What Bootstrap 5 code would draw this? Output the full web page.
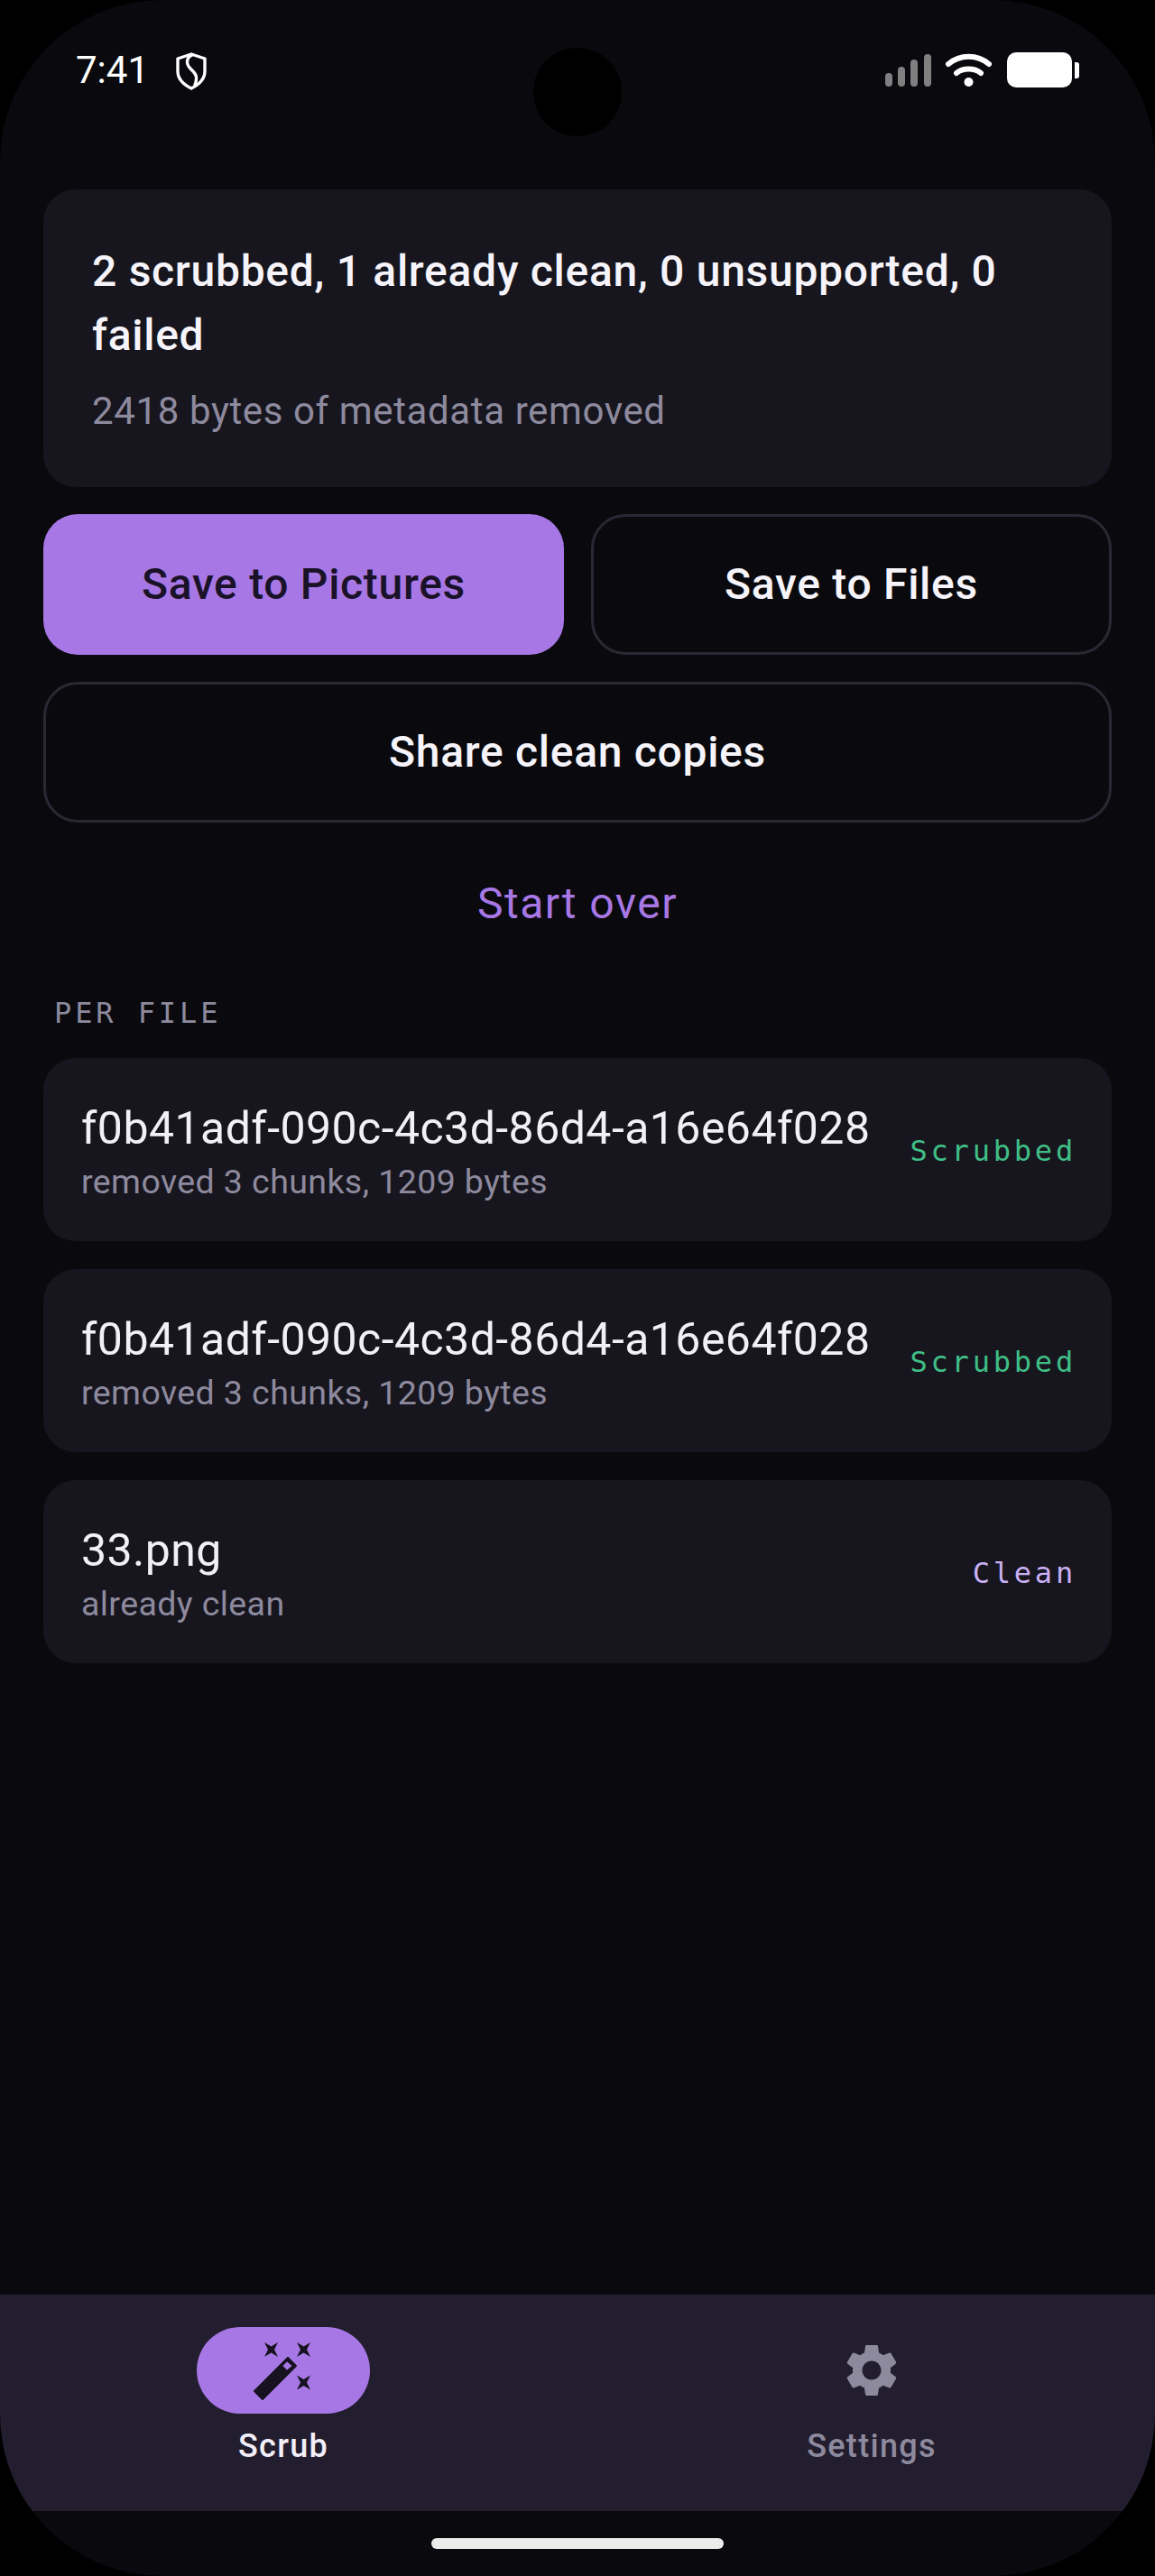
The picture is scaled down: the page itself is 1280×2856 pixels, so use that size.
<!DOCTYPE html>
<html lang="en">
<head>
  <meta charset="UTF-8">
  <title>Scrub</title>
  <link href="https://cdn.jsdelivr.net/npm/bootstrap@5.3.3/dist/css/bootstrap.min.css" rel="stylesheet">
  <style>
    html, body { background: #000; margin: 0; }
    body { font-family: Roboto, "Liberation Sans", sans-serif; }
    .screen {
      width: 1280px; height: 2856px; background: #0a0a0e; border-radius: 180px;
      overflow: hidden; position: relative; color: #f2eff8;
    }
    .status-bar { height: 210px; padding: 58px 84px 0 84px; flex-shrink: 0; }
    .clock { font-size: 42px; line-height: 40px; color: #fff; font-weight: 400; }
    .notch { position: absolute; left: 591px; top: 53px; width: 98px; height: 98px; border-radius: 50%; background: #000; }
    .body-area { padding: 0 48px; }
    .summary { background: #17161e; border: 0; border-radius: 36px; padding: 55px 54px 0; height: 330px; color: inherit; }
    .summary-title { font-size: 48px; font-weight: 500; line-height: 71px; color: #f6f4fa; letter-spacing: .72px; }
    .summary-sub { font-size: 42px; line-height: 60px; color: #8e8a9e; margin-top: 19px; letter-spacing: .62px; }
    .act {
      height: 156px; border-radius: 38px; font-size: 48px; font-weight: 500; padding: 0; letter-spacing: .7px;
      display: flex; align-items: center; justify-content: center;
    }
    .act-main, .act-main:hover { background: #a778e5; border: 0; color: #1a1228; }
    .act-line, .act-line:hover { background: transparent; border: 3px solid #2a2833; color: #f6f4fa; }
    .act-row { gap: 30px; margin: 30px 0; }
    .act-row .act { width: 50%; }
    .start-link { font-size: 48px; color: #a778e5; line-height: 60px; margin-top: 60px; letter-spacing: 1.5px; }
    .sect-label {
      font-family: "DejaVu Sans Mono", monospace; font-size: 32px; letter-spacing: 3.9px; color: #8e8a9e;
      line-height: 40px; margin: 71px 0 30px 12px;
    }
    .file-list { gap: 31px; }
    .file-row { background: #17161e; border: 0; border-radius: 36px; height: 203px; padding: 0 42px; color: inherit; }
    .file-text { padding-top: 4px; }
    .file-name { font-size: 50px; line-height: 58px; color: #f2eff8; letter-spacing: .45px; }
    .file-sub { font-size: 37.500px; line-height: 44px; color: #8e8a9e; margin-top: 8px; letter-spacing: .42px; }
    .tag { font-family: "DejaVu Sans Mono", monospace; font-size: 32px; letter-spacing: 3.8px; line-height: 40px; margin: 2px -3px 0 0; }
    .tag-ok { color: #3fbf86; }
    .tag-clean { color: #c9b0f5; }
    .bottom-nav { position: absolute; left: 0; right: 0; top: 2544px; height: 240px; background: #231e2f; gap: 24px; }
    .tab-item { flex: 1 1 0; padding-top: 36px; }
    .tab-ico { width: 192px; height: 96px; border-radius: 48px; }
    .tab-on { background: #a778e5; }
    .tab-label { font-size: 36px; line-height: 46px; margin-top: 13px; font-weight: 500; letter-spacing: 1.3px; }
    .tab-label-off { color: #8e8a9e; }
    .home-bar { position: absolute; left: 478px; top: 2814px; width: 324px; height: 12px; border-radius: 6px; background: #ececec; }
    .shield { margin-left: 5px; }
  </style>
</head>
<body>
  <div class="screen d-flex flex-column">
    <div class="status-bar d-flex justify-content-between align-items-start">
      <div class="d-flex align-items-start gap-4">
        <span class="clock">7:41</span>
        <svg class="shield" width="36" height="42" viewBox="0 0 36 42" fill="none" stroke="#fff" stroke-width="3.4" stroke-linejoin="round" stroke-linecap="round">
          <path d="M18 2 L33 7 V21 C33 30 26 36 18 40 C10 36 3 30 3 21 V7 Z"/>
          <path d="M19 3 C12 6 12 13 17 18 C22 23 26 26 22 36"/>
        </svg>
      </div>
      <svg width="216" height="42" viewBox="0 0 216 42">
        <g fill="#808080">
          <rect x="1" y="23" width="8" height="15" rx="4"/>
          <rect x="15" y="16" width="8" height="22" rx="4"/>
          <rect x="29" y="8" width="8" height="30" rx="4"/>
          <rect x="44" y="2" width="8" height="36" rx="4"/>
        </g>
        <g fill="none" stroke="#fff" stroke-width="6" stroke-linecap="round">
          <path d="M71 13 C84 2 103 2 116 13"/>
          <path d="M80 23 C87 17 100 17 107 23"/>
        </g>
        <circle cx="93.500" cy="33" r="5" fill="#fff"/>
        <rect x="136" y="0" width="72" height="39" rx="10" fill="#fff"/>
        <path d="M211 11 h2 a3 3 0 0 1 3 3 v12 a3 3 0 0 1 -3 3 h-2 z" fill="#fff"/>
      </svg>
    </div>
    <div class="notch"></div>

    <div class="body-area">
      <div class="card summary">
        <div class="summary-title">2 scrubbed, 1 already clean, 0 unsupported, 0 failed</div>
        <div class="summary-sub">2418 bytes of metadata removed</div>
      </div>

      <div class="d-flex act-row">
        <button class="btn act act-main">Save to Pictures</button>
        <button class="btn act act-line">Save to Files</button>
      </div>
      <button class="btn act act-line w-100">Share clean copies</button>

      <div class="start-link text-center">Start over</div>
      <div class="sect-label">PER FILE</div>

      <div class="d-flex flex-column file-list">
        <div class="card file-row flex-row align-items-center justify-content-between">
          <div class="file-text">
            <div class="file-name">f0b41adf-090c-4c3d-86d4-a16e64f028</div>
            <div class="file-sub">removed 3 chunks, 1209 bytes</div>
          </div>
          <span class="tag tag-ok">Scrubbed</span>
        </div>
        <div class="card file-row flex-row align-items-center justify-content-between">
          <div class="file-text">
            <div class="file-name">f0b41adf-090c-4c3d-86d4-a16e64f028</div>
            <div class="file-sub">removed 3 chunks, 1209 bytes</div>
          </div>
          <span class="tag tag-ok">Scrubbed</span>
        </div>
        <div class="card file-row flex-row align-items-center justify-content-between">
          <div class="file-text">
            <div class="file-name">33.png</div>
            <div class="file-sub">already clean</div>
          </div>
          <span class="tag tag-clean">Clean</span>
        </div>
      </div>
    </div>

    <div class="bottom-nav d-flex">
      <div class="tab-item d-flex flex-column align-items-center">
        <div class="tab-ico tab-on d-flex align-items-center justify-content-center">
          <svg width="80" height="80" viewBox="0 0 80 80" fill="#17121f">
            <path fill-rule="evenodd" stroke="#17121f" stroke-width="2" stroke-linejoin="round" d="M45 26 L54 35 L17 72 L8 63 Z M38 35 L44 41 L51 35 L44 29 Z"/>
            <path d="M19 9 L26.600 13.500 L34 9 L30 17 L34 25 L26.600 20.500 L19 25 L23 17 Z"/>
            <path d="M55 9 L62.500 13.500 L70 9 L66 17 L70 25 L62.500 20.500 L55 25 L59 17 Z"/>
            <path d="M55 45.500 L62.500 50 L70 45.500 L66 53.500 L70 61.500 L62.500 57 L55 61.500 L59 53.500 Z"/>
          </svg>
        </div>
        <div class="tab-label">Scrub</div>
      </div>
      <div class="tab-item d-flex flex-column align-items-center">
        <div class="tab-ico d-flex align-items-center justify-content-center">
          <svg width="70" height="70" viewBox="0 0 24 24" fill="#8e8a9e">
            <path d="M19.140 12.940c.04-.3.06-.61.06-.94 0-.32-.02-.64-.07-.94l2.030-1.580c.18-.14.23-.41.12-.61l-1.920-3.320c-.12-.22-.37-.29-.59-.22l-2.390.96c-.5-.38-1.030-.7-1.620-.94l-.36-2.540c-.04-.24-.24-.41-.48-.41h-3.840c-.24 0-.43.17-.47.41l-.36 2.540c-.59.24-1.130.57-1.620.94l-2.390-.96c-.22-.08-.47 0-.59.22L2.740 8.870c-.12.21-.08.47.12.61l2.030 1.580c-.05.3-.09.63-.09.94s.02.64.07.94l-2.030 1.580c-.18.14-.23.41-.12.61l1.920 3.320c.12.22.37.29.59.22l2.390-.96c.5.38 1.030.7 1.620.94l.36 2.540c.05.24.24.41.48.41h3.840c.24 0 .44-.17.47-.41l.36-2.540c.59-.24 1.130-.56 1.620-.94l2.390.96c.22.08.47 0 .59-.22l1.920-3.320c.12-.22.07-.47-.12-.61l-2.010-1.580zM12 15.600c-1.980 0-3.600-1.620-3.600-3.600s1.620-3.600 3.600-3.600 3.600 1.620 3.600 3.600-1.620 3.600-3.600 3.600z"/>
          </svg>
        </div>
        <div class="tab-label tab-label-off">Settings</div>
      </div>
    </div>
    <div class="home-bar"></div>
  </div>

  <script src="https://cdn.jsdelivr.net/npm/bootstrap@5.3.3/dist/js/bootstrap.bundle.min.js"></script>
</body>
</html>
